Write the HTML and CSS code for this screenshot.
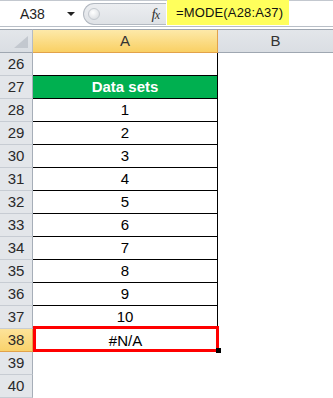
FILE: index.html
```html
<!DOCTYPE html>
<html lang="en">
<head>
    <meta charset="UTF-8" />
    <title>MODE</title>
    <link rel="stylesheet" href="styles.css">
</head>
<body>
    <div class="formula-bar">
        <div class="name-box">
            <span class="cell-ref">A38</span>
            <span class="drop"></span>
        </div>
        <div class="fx-area">
            <span class="knob"></span>
            <span class="fx"><i>f</i><i>x</i></span>
        </div>
        <div class="formula">
            <span class="highlight">=MODE(A28:A37)</span>
        </div>
    </div>
    <div class="sheet">
        <div class="corner"><span class="tri"></span></div>
        <div class="col-head active">A</div>
        <div class="col-head">B</div>

        <div class="row-head">26</div><div class="cell top-edge"></div><div class="cell"></div>
        <div class="row-head">27</div><div class="cell title">Data sets</div><div class="cell"></div>
        <div class="row-head">28</div><div class="cell boxed">1</div><div class="cell"></div>
        <div class="row-head">29</div><div class="cell boxed">2</div><div class="cell"></div>
        <div class="row-head">30</div><div class="cell boxed">3</div><div class="cell"></div>
        <div class="row-head">31</div><div class="cell boxed">4</div><div class="cell"></div>
        <div class="row-head">32</div><div class="cell boxed">5</div><div class="cell"></div>
        <div class="row-head">33</div><div class="cell boxed">6</div><div class="cell"></div>
        <div class="row-head">34</div><div class="cell boxed">7</div><div class="cell"></div>
        <div class="row-head">35</div><div class="cell boxed">8</div><div class="cell"></div>
        <div class="row-head">36</div><div class="cell boxed">9</div><div class="cell"></div>
        <div class="row-head">37</div><div class="cell boxed">10</div><div class="cell"></div>
        <div class="row-head active">38</div><div class="cell">#N/A</div><div class="cell"></div>
        <div class="row-head">39</div><div class="cell"></div><div class="cell"></div>
        <div class="row-head">40</div><div class="cell"></div><div class="cell"></div>

        <div class="selection"><span class="handle"></span></div>
    </div>
</body>
</html>
```

FILE: styles.css
```css
html,
body {
    margin: 0;
    width: 333px;
    height: 398px;
    overflow: hidden;
    background: #fff;
    font-family: "Liberation Sans", Arial, sans-serif;
    color: #000;
}
.formula-bar {
    display: flex;
    border-top: 1px solid #c3c8cf;
    border-bottom: 1px solid #b9bfc7;
    margin-bottom: 2px;
    box-sizing: border-box;
    height: 27px;
}
.name-box {
    width: 83px;
    display: flex;
    align-items: center;
    box-sizing: border-box;
    padding-left: 20px;
}
.cell-ref {
    font-size: 14px;
    color: #1e1e1e;
    flex: 1;
}
.drop {
    width: 0;
    height: 0;
    border-left: 4px solid transparent;
    border-right: 4px solid transparent;
    border-top: 4px solid #222;
    margin-right: 8px;
    margin-top: 1px;
}
.fx-area {
    width: 83px;
    margin: 2px 0 0;
    height: 22px;
    box-sizing: border-box;
    background: linear-gradient(#eceef1, #dfe2e6);
    border: 1px solid #b3b9c1;
    border-right: none;
    border-radius: 12px 0 0 12px;
    display: flex;
    align-items: center;
    padding-left: 4px;
}
.knob {
    width: 10px;
    height: 10px;
    border-radius: 50%;
    background: radial-gradient(circle at 40% 35%, #fff, #d3d7dc);
    border: 1px solid #c4c9cf;
}
.fx {
    margin-left: auto;
    margin-right: 7px;
    font-family: "Liberation Serif", serif;
    font-size: 15px;
    color: #333;
    letter-spacing: -1px;
}
.fx i:last-child {
    font-size: 12px;
}
.formula {
    flex: 1;
    padding-left: 1px;
}
.highlight {
    display: inline-block;
    height: 25px;
    line-height: 25px;
    margin-top: -1px;
    background: #ffff5c;
    padding: 0 6px 0 9px;
    font-size: 13px;
    letter-spacing: 0.15px;
    color: #111;
}
.sheet {
    position: relative;
    display: grid;
    grid-template-columns: 33px 185px 1fr;
    grid-template-rows: 24px;
    grid-auto-rows: 23px;
    font-size: 15px;
}
.corner,
.col-head {
    box-sizing: border-box;
    border-top: 1px solid #9fa7b1;
    border-bottom: 1px solid #9fa7b1;
    background: linear-gradient(#e3e6ea, #dadee3);
}
.corner {
    border-right: 1px solid #b5bcc5;
    position: relative;
}
.tri {
    position: absolute;
    right: 4px;
    bottom: 4px;
    width: 0;
    height: 0;
    border-left: 14px solid transparent;
    border-bottom: 12px solid #c3c8cf;
}
.col-head {
    text-align: center;
    line-height: 22px;
    color: #333;
}
.col-head.active {
    background: linear-gradient(#fde9a9, #f9d064);
    border-bottom-color: #e2a24a;
    border-right: 1px solid #e2a24a;
}
.row-head {
    box-sizing: border-box;
    background: #e3e6ea;
    border-bottom: 1px solid #c7ccd3;
    border-right: 1px solid #a6aeb8;
    text-align: center;
    line-height: 22px;
    color: #2a2a2a;
}
.row-head.active {
    background: linear-gradient(#fde39a, #f9d26b);
    border-right-color: #e2a24a;
    border-bottom-color: #e2a24a;
}
.cell {
    box-sizing: border-box;
    text-align: center;
    line-height: 23px;
}
.top-edge {
    border-bottom: 1px solid #000;
    border-right: 1px solid #000;
}
.title {
    background: #00b050;
    color: #fff;
    font-weight: bold;
    line-height: 22px;
    border-bottom: 1px solid #000;
    border-right: 1px solid #000;
}
.boxed {
    line-height: 22px;
    border-bottom: 1px solid #000;
    border-right: 1px solid #000;
}
.selection {
    position: absolute;
    left: 33px;
    top: 297px;
    width: 186px;
    height: 26px;
    box-sizing: border-box;
    border: 3px solid #ff0000;
}
.handle {
    position: absolute;
    right: -5px;
    bottom: -4px;
    width: 5px;
    height: 5px;
    background: #000;
}
```
